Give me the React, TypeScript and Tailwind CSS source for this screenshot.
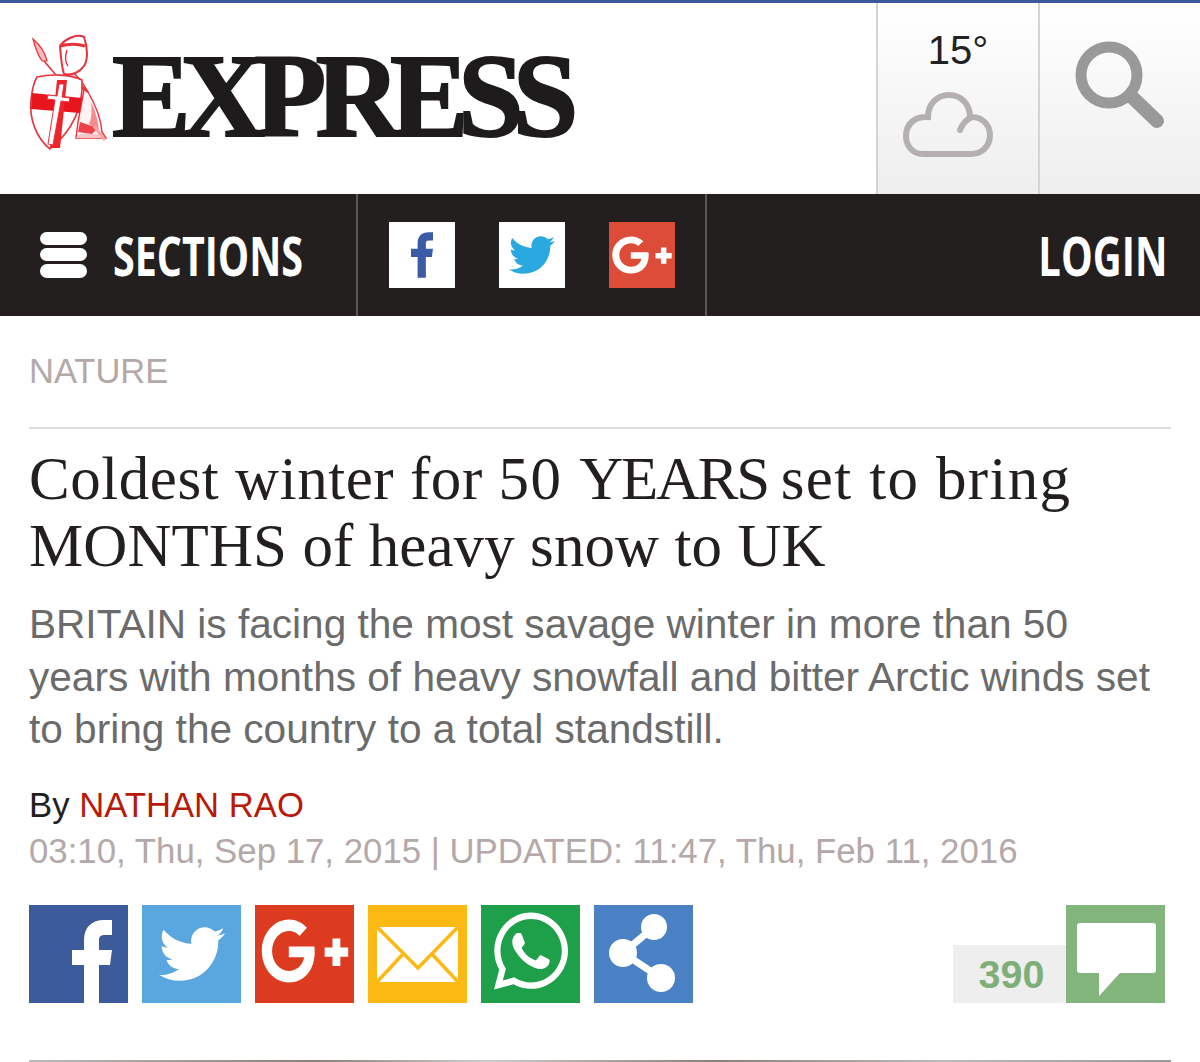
import { FaGooglePlusG, FaTwitter, FaWhatsapp } from "react-icons/fa";

const F_PATH =
  "M12 83V45H0V30H12V20C12 7 20 0 32 0H40V15H33C28 15 27 17 27 21V30H40L38 45H27V83Z";

const KnightLogo = () => (
  <svg viewBox="0 0 110 130" className="w-[110px] h-[130px] shrink-0" fill="none">
    {/* spear */}
    <path d="M13 9C20 15 25 22 27 31L22 31C18 25 15 17 13 9Z" fill="#f6bcbc" stroke="#e8323a" strokeWidth="1.2" />
    <path d="M24 31L42 52" stroke="#e8323a" strokeWidth="1.6" />
    {/* body and cloak */}
    <path d="M44 36C52 40 62 50 68 62C75 74 81 88 82 102L86 108H56L58 92L64 60L46 46Z" fill="#fff3f3" stroke="#e8323a" strokeWidth="1.4" />
    <path d="M71 72C76 82 78 92 79 100L69 94C72 88 72 80 71 72Z" fill="#f58b8f" />
    <path d="M60 92L78 98L72 104L58 102Z" fill="#ee4248" />
    <path d="M60 104H78L84 108H56Z" fill="#f9c4c6" />
    <path d="M74 96L85 110" stroke="#f7a3a6" strokeWidth="3" />
    {/* hood */}
    <path d="M40 16C44 10 56 3 64 7C68 18 68 30 64 36C60 42 52 46 44 44C42 38 41 30 40 16Z" fill="#fff" stroke="#e8323a" strokeWidth="2" />
    <path d="M40 16C48 14 58 14 65 16" stroke="#e8323a" strokeWidth="3" />
    <path d="M47 20C45 26 45 32 48 36" stroke="#e8323a" strokeWidth="1.4" />
    <path d="M46 44C52 50 60 54 68 62" stroke="#e8323a" strokeWidth="2.4" />
    {/* shield */}
    <path d="M17 47C30 44 50 44 62 50C63 70 58 96 30 119C16 108 9 88 11 70C12 60 14 52 17 47Z" fill="#fff" stroke="#e8323a" strokeWidth="1.6" />
    <path d="M12 63L62 68L60 83L11 79Z" fill="#e8141e" />
    <path d="M37 50L47 50L40 118L30 118Z" fill="#f0222a" />
    {/* sword */}
    <path d="M39 54L44 54L42 67L50 68L49 72L41 71L33 115L28 114L35 70L27 69L28 65L37 66Z" fill="#fff" stroke="#e8323a" strokeWidth="1" />
  </svg>
);

const CloudIcon = () => (
  <svg viewBox="0 0 90 66" className="w-[90px] h-[66px]" fill="none" stroke="#b5b0b0" strokeWidth="6" strokeLinecap="round">
    <path d="M20 62C8 62 3 52 3 44C3 32 12 24 25 25C25 12 34 3 46 3C58 3 67 12 67 25C80 24 87 34 87 43C87 54 79 62 68 62Z" />
    <path d="M57 38C60 31 63 28 67 26" />
  </svg>
);

const SearchIcon = () => (
  <svg viewBox="0 0 92 92" className="w-[92px] h-[92px]" fill="none" stroke="#999999">
    <circle cx="34" cy="34" r="28" strokeWidth="11" />
    <path d="M58 57L82 80" strokeWidth="14" strokeLinecap="round" />
  </svg>
);

const HeaderCell = ({ children }: { children: React.ReactNode }) => (
  <div className="w-[162px] border-l-2 border-[#d4d4d4] bg-gradient-to-b from-white to-[#eeeeee] flex flex-col items-center">
    {children}
  </div>
);

const Header = () => (
  <header className="flex h-[191px] bg-white">
    <div className="flex-1 flex items-start pl-[20px] pt-[27px]">
      <KnightLogo />
      <span className="ml-[-18px] mt-[2px] font-['Liberation_Serif',serif] font-bold text-[118px] leading-[130px] tracking-[-10.8px] text-[#1d1b1b] [-webkit-text-stroke:2px_#1d1b1b]">
        EXPRESS
      </span>
    </div>
    <HeaderCell>
      <span className="pt-[24px] font-['Liberation_Sans',sans-serif] text-[40px] leading-[47px] text-[#222222]">15°</span>
      <div className="mt-[18px] mr-[20px]">
        <CloudIcon />
      </div>
    </HeaderCell>
    <HeaderCell>
      <div className="pt-[38px] pl-[1px]">
        <SearchIcon />
      </div>
    </HeaderCell>
  </header>
);

const NavIcon = ({ bg, children }: { bg: string; children: React.ReactNode }) => (
  <div className={`w-[66px] h-[66px] flex items-center justify-center ${bg}`}>{children}</div>
);

const Nav = () => (
  <nav className="flex h-[122px] bg-[#231f1f] text-white font-['Open_Sans',sans-serif] font-bold">
    <div className="w-[358px] border-r-2 border-[#5a5757] flex items-center pl-[40px]">
      <div className="flex flex-col gap-[3px] w-[47px] shrink-0">
        <div className="h-[13px] rounded-full bg-white" />
        <div className="h-[13px] rounded-full bg-white" />
        <div className="h-[14px] rounded-full bg-white" />
      </div>
      <span className="ml-[26px] text-[54px] leading-none origin-left scale-x-[0.73] whitespace-nowrap">SECTIONS</span>
    </div>
    <div className="w-[349px] border-r-2 border-[#5a5757] flex items-center pl-[31px] gap-[44px]">
      <NavIcon bg="bg-white">
        <svg viewBox="0 0 40 83" className="w-[22px] h-[46px]" fill="#3b5ba5">
          <path d={F_PATH} />
        </svg>
      </NavIcon>
      <NavIcon bg="bg-white">
        <FaTwitter className="w-[46px] h-[46px] text-[#2aa9e0]" />
      </NavIcon>
      <NavIcon bg="bg-[#dd4b39]">
        <FaGooglePlusG className="w-[62px] h-[50px] text-white" />
      </NavIcon>
    </div>
    <div className="flex-1 flex items-center justify-end pr-[33px]">
      <span className="text-[54px] leading-none origin-right scale-x-[0.74] whitespace-nowrap">LOGIN</span>
    </div>
  </nav>
);

const ShareBox = ({ bg, children }: { bg: string; children: React.ReactNode }) => (
  <div className={`w-[99px] h-[98px] flex items-center justify-center overflow-hidden ${bg}`}>{children}</div>
);

const ShareRow = () => (
  <div className="mt-[31px] flex items-end justify-between pr-[6px]">
    <div className="flex gap-[14px]">
      <ShareBox bg="bg-[#3b5b9a]">
        <svg viewBox="0 0 99 98" className="w-[99px] h-[98px]" fill="#ffffff">
          <path d="M55 98V60H43V45H55V35C55 22 63 15 75 15H83V30H76C71 30 70 32 70 36V45H83L81 60H70V98Z" />
        </svg>
      </ShareBox>
      <ShareBox bg="bg-[#5aa7df]">
        <FaTwitter className="w-[66px] h-[66px] text-white" />
      </ShareBox>
      <ShareBox bg="bg-[#dc3b1f]">
        <FaGooglePlusG preserveAspectRatio="none" className="w-[90px] h-[84px] mb-[6px] text-white" />
      </ShareBox>
      <ShareBox bg="bg-[#fdb913]">
        <svg viewBox="0 0 99 98" className="w-[99px] h-[98px]">
          <rect x="9" y="22" width="81" height="55" fill="#ffffff" />
          <path d="M9 22L50 63L90 22M9 77L35 49M90 77L64 49" fill="none" stroke="#fdb913" strokeWidth="3.5" />
        </svg>
      </ShareBox>
      <ShareBox bg="bg-[#1ea04b]">
        <FaWhatsapp preserveAspectRatio="none" className="w-[74px] h-[88px] mb-[5px] text-white" />
      </ShareBox>
      <ShareBox bg="bg-[#4a80c4]">
        <svg viewBox="0 0 99 98" className="w-[99px] h-[98px]" fill="#ffffff">
          <path d="M60 22L29 48L67 73" fill="none" stroke="#ffffff" strokeWidth="7" />
          <circle cx="60" cy="22" r="13" />
          <circle cx="29" cy="48" r="14" />
          <circle cx="67" cy="73" r="14" />
        </svg>
      </ShareBox>
    </div>
    <div className="flex items-end">
      <div className="w-[113px] h-[58px] pt-[2px] pl-[4px] bg-[#eeeeee] flex items-center justify-center font-['Liberation_Sans',sans-serif] font-bold text-[39.5px] text-[#7fae78]">
        390
      </div>
      <div className="w-[99px] h-[98px] bg-[#82b57b]">
        <svg viewBox="0 0 99 98" className="w-[99px] h-[98px]" fill="#ffffff">
          <path d="M14 18H87C89 18 90 19 90 21V65C90 67 89 68 87 68H54L33 91V68H14C12 68 11 67 11 65V21C11 19 12 18 14 18Z" />
        </svg>
      </div>
    </div>
  </div>
);

const Article = () => (
  <main className="px-[29px] font-['Liberation_Sans',sans-serif]">
    <div className="pt-[34px] text-[34.5px] leading-[42px] text-[#b5a8a8]">NATURE</div>
    <div className="mt-[35px] h-[2px] bg-[#dddddd]" />
    <h1 className="mt-[16px] font-['Liberation_Serif',serif] font-normal text-[61px] leading-[67px] text-[#231f1f]">
      <span className="tracking-[0.55px]">Coldest winter for </span>
      <span className="tracking-[1.5px]">50 </span>
      <span className="tracking-[-2.3px]">YEARS </span>
      <span className="tracking-[1.35px]">set to bring</span>
      <br />
      <span className="tracking-[0.08px]">MONTHS of heavy snow to UK</span>
    </h1>
    <p className="mt-[19px] text-[40.6px] leading-[52.5px] text-[#6b6b6b]">
      BRITAIN is facing the most savage winter in more than 50
      <br />
      years with months of heavy snowfall and bitter Arctic winds set
      <br />
      to bring the country to a total standstill.
    </p>
    <p className="mt-[26px] text-[34.7px] leading-[46px] text-[#231f1f]">
      By <span className="text-[#b81a0a]">NATHAN RAO</span>
    </p>
    <p className="text-[34.8px] leading-[46px] text-[#b5a8a8]">
      03:10, Thu, Sep 17, 2015 | UPDATED: 11:47, Thu, Feb 11, 2016
    </p>
    <ShareRow />
    <div className="mt-[57px] h-[2px] bg-[linear-gradient(90deg,#bbb,#8a8178_25%,#ccc_40%,#8a8178_60%,#bbb_80%,#999)]" />
  </main>
);

export default function App() {
  return (
    <div className="w-[1200px] h-[1062px] overflow-hidden bg-white">
      <div className="h-[3px] bg-[#3b5998]" />
      <Header />
      <Nav />
      <Article />
    </div>
  );
}
